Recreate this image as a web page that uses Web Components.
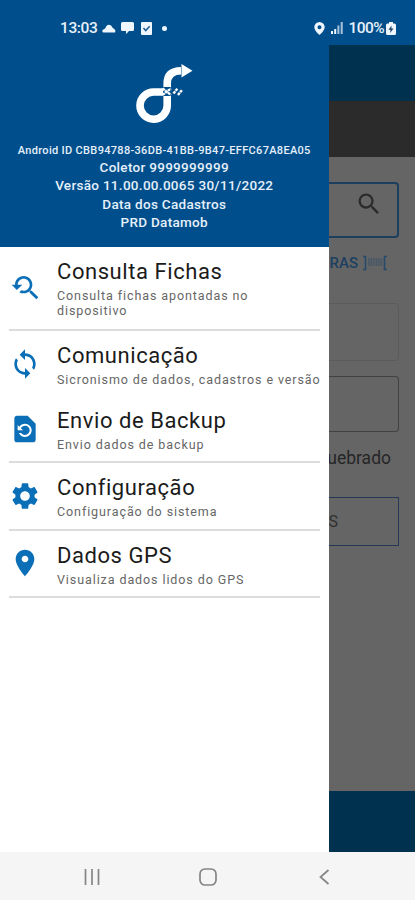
<!DOCTYPE html>
<html lang="pt-BR">
<head>
<meta charset="utf-8">
<title>Datamob</title>
<style>
  body {
    margin: 0;
    font-family: Roboto, "Liberation Sans", sans-serif;
    --brand: #004f8c;
    --accent: #0b6fb8;
  }
</style>
</head>
<body>
<app-screen>
  <status-bar slot="status" time="13:03" battery="100%"></status-bar>
  <nav-drawer>
    <drawer-header slot="header">
      <span slot="device">Android ID CBB94788-36DB-41BB-9B47-EFFC67A8EA05</span>
      <div>Coletor 9999999999</div>
      <div>Versão 11.00.00.0065 30/11/2022</div>
      <div>Data dos Cadastros</div>
      <div>PRD Datamob</div>
    </drawer-header>
    <drawer-item icon="search" style="height:84px" divider>Consulta Fichas<span slot="sub">Consulta fichas apontadas no<br>dispositivo</span></drawer-item>
    <drawer-item icon="sync" style="height:65px">Comunicação<span slot="sub">Sicronismo de dados, cadastros e versão</span></drawer-item>
    <drawer-item icon="backup" divider>Envio de Backup<span slot="sub">Envio dados de backup</span></drawer-item>
    <drawer-item icon="settings" divider>Configuração<span slot="sub">Configuração do sistema</span></drawer-item>
    <drawer-item icon="place" divider>Dados GPS<span slot="sub">Visualiza dados lidos do GPS</span></drawer-item>
  </nav-drawer>
  <dimmed-page></dimmed-page>
  <system-nav slot="nav"></system-nav>
</app-screen>

<script>
const ICONS = {
  search: 'M17.01 14h-.8l-.27-.27c.98-1.14 1.57-2.61 1.57-4.23 0-3.59-2.91-6.5-6.5-6.5s-6.5 3-6.5 6.5H2l3.84 4 4.16-4H6.51C6.51 7 8.53 5 11.01 5s4.5 2.01 4.5 4.5c0 2.48-2.02 4.5-4.5 4.5-.65 0-1.26-.14-1.82-.38L7.71 15.1c.97.57 2.09.9 3.3.9 1.61 0 3.08-.59 4.22-1.57l.27.27v.79l5.01 4.99L22 19l-4.99-5z',
  sync: 'M12 4V1L8 5l4 4V6c3.31 0 6 2.69 6 6 0 1.01-.25 1.97-.7 2.8l1.46 1.46C19.54 15.03 20 13.57 20 12c0-4.42-3.58-8-8-8zm0 14c-3.31 0-6-2.69-6-6 0-1.01.25-1.97.7-2.8L5.24 7.74C4.46 8.97 4 10.43 4 12c0 4.42 3.58 8 8 8v3l4-4-4-4v3z',
  backup: 'M14 2H6c-1.1 0-1.99.9-1.99 2L4 20c0 1.1.89 2 1.99 2H18c1.1 0 2-.9 2-2V8l-6-6zm-2 16c-2.05 0-3.81-1.24-4.58-3h1.71c.63.9 1.68 1.5 2.87 1.5 1.93 0 3.5-1.57 3.5-3.5S13.93 9.5 12 9.5c-1.35 0-2.52.78-3.1 1.9l1.6 1.6h-4V9l1.3 1.3C8.69 8.92 10.23 8 12 8c2.76 0 5 2.24 5 5s-2.24 5-5 5z',
  settings: 'M19.14 12.94c.04-.3.06-.61.06-.94 0-.32-.02-.64-.07-.94l2.03-1.58c.18-.14.23-.41.12-.61l-1.92-3.32c-.12-.22-.37-.29-.59-.22l-2.39.96c-.5-.38-1.03-.7-1.62-.94l-.36-2.54c-.04-.24-.24-.41-.48-.41h-3.84c-.24 0-.43.17-.47.41l-.36 2.54c-.59.24-1.13.57-1.62.94l-2.39-.96c-.22-.08-.47 0-.59.22L2.74 8.87c-.12.21-.08.47.12.61l2.03 1.58c-.05.3-.09.63-.09.94s.02.64.07.94l-2.03 1.58c-.18.14-.23.41-.12.61l1.92 3.32c.12.22.37.29.59.22l2.39-.96c.5.38 1.03.7 1.62.94l.36 2.54c.05.24.24.41.48.41h3.84c.24 0 .44-.17.47-.41l.36-2.54c.59-.24 1.13-.56 1.62-.94l2.39.96c.22.08.47 0 .59-.22l1.92-3.32c.12-.22.07-.47-.12-.61l-2.01-1.58zM12 15.6c-1.98 0-3.6-1.62-3.6-3.6s1.62-3.6 3.6-3.6 3.6 1.62 3.6 3.6-1.62 3.6-3.6 3.6z',
  place: 'M12 2C8.13 2 5 5.13 5 9c0 5.25 7 13 7 13s7-7.75 7-13c0-3.87-3.13-7-7-7zm0 9.5c-1.38 0-2.5-1.12-2.5-2.5s1.12-2.5 2.5-2.5 2.5 1.12 2.5 2.5-1.12 2.5-2.5 2.5z'
};

class AppScreen extends HTMLElement {
  constructor() {
    super();
    this.attachShadow({ mode: 'open' }).innerHTML = `
      <style>
        :host {
          display: flex;
          flex-direction: column;
          width: 415px;
          height: 900px;
          overflow: hidden;
          background: #fff;
        }
        .body { display: flex; flex: 1; min-height: 0; }
      </style>
      <slot name="status"></slot>
      <div class="body"><slot></slot></div>
      <slot name="nav"></slot>
    `;
  }
}

class StatusBar extends HTMLElement {
  connectedCallback() {
    this.attachShadow({ mode: 'open' }).innerHTML = `
      <style>
        :host {
          display: flex;
          justify-content: space-between;
          align-items: center;
          box-sizing: border-box;
          height: 45px;
          padding: 11px 19px 0 60px;
          background: var(--brand);
          color: #e8f0fa;
          font-size: 15.5px;
          font-weight: 500;
        }
        div { display: flex; align-items: center; }
        svg { display: block; fill: #f0f6fd; }
        .time { letter-spacing: -.4px; }
        .battery { letter-spacing: -.6px; }
      </style>
      <div>
        <span class="time">${this.getAttribute('time')}</span>
        <svg style="margin-left:5px" width="14" height="9" viewBox="0 0 14 9"><path d="M1.8 8.500Q.3 8.500.3 7T2.200 5.200L3.600 3.800Q4.500.8 7 .8t3.400 2.700L13 5.700Q14 8.500 12.300 8.500z"/></svg>
        <svg style="margin-left:5px" width="13" height="12" viewBox="0 0 13 12"><path d="M1.5 0h10Q13 0 13 1.5v6Q13 9 11.5 9H8L5 12V9H1.5Q0 9 0 7.5v-6Q0 0 1.5 0z"/></svg>
        <svg style="margin-left:7px" width="11" height="13" viewBox="0 0 11 13"><rect width="11" height="13" rx="1"/><path d="M2.5 6l2.2 2.6L8.7 4.2" fill="none" stroke="#1d5c94" stroke-width="1.5"/></svg>
        <svg style="margin-left:10px" width="5" height="5" viewBox="0 0 5 5"><circle cx="2.5" cy="2.5" r="2.5"/></svg>
      </div>
      <div>
        <svg width="11" height="13" viewBox="0 0 11 13"><path fill-rule="evenodd" d="M5.5 0a5.2 5.2 0 0 1 5.2 5.2C10.7 8.5 5.5 13 5.5 13S.3 8.5.3 5.2A5.2 5.2 0 0 1 5.5 0zm0 3.2a2 2 0 1 0 0 4 2 2 0 0 0 0-4z"/></svg>
        <svg style="margin:0 6px" width="12" height="12" viewBox="0 0 12 12"><path d="M0 9h2v3H0zM3.2 7h2v5h-2z"/><path opacity=".7" d="M6.4 3.5h2V12h-2zM9.7 0h2v12h-2z"/></svg>
        <span class="battery">${this.getAttribute('battery')}</span>
        <svg style="margin-left:2px" width="10" height="13" viewBox="0 0 10 13"><path d="M3 0h4v1.5h1.5Q10 1.5 10 3v8.5Q10 13 8.5 13h-7Q0 13 0 11.5V3q0-1.5 1.5-1.5H3z"/><path d="M5.6 3.5L2.5 7.8h2.1l-.5 3.2 3.4-4.4H5.3z" fill="#173e66"/></svg>
      </div>
    `;
  }
}

class NavDrawer extends HTMLElement {
  constructor() {
    super();
    this.attachShadow({ mode: 'open' }).innerHTML = `
      <style>
        :host {
          display: flex;
          flex-direction: column;
          flex: none;
          width: 328.5px;
          background: #fff;
        }
      </style>
      <slot name="header"></slot>
      <slot></slot>
    `;
  }
}

class DrawerHeader extends HTMLElement {
  constructor() {
    super();
    this.attachShadow({ mode: 'open' }).innerHTML = `
      <style>
        :host {
          display: flex;
          flex-direction: column;
          align-items: center;
          box-sizing: border-box;
          height: 202px;
          padding-top: 18px;
          background: var(--brand);
          color: #e6effa;
          text-align: center;
          white-space: nowrap;
          font-weight: 500;
        }
        svg { display: block; margin-left: 2px; }
        .device { margin-top: 18px; font-size: 11px; line-height: 16px; letter-spacing: .32px; }
        .lines { margin-top: -1px; font-size: 13.5px; line-height: 18.4px; letter-spacing: .3px; }
      </style>
      <svg width="60" height="62" viewBox="0 0 60 62">
        <g fill="none" stroke="#fff" stroke-width="7.6">
          <path d="M28 29H18.7A13.6 13.6 0 1 0 32.2 42.6V33"/>
          <path d="M32.2 24v-3.5Q32.2 8 46 7.8"/>
        </g>
        <path d="M46.5 1l11 6.8L46.5 14.500z" fill="#fff"/>
        <path d="M27.500 25.500l8.500 6.400M27.500 31.900l8.500-6.400M38.500 30.500l4-5M43 32l4-5" stroke="#fff" stroke-width="2.4" stroke-dasharray="2.8 .6"/>
      </svg>
      <div class="device"><slot name="device"></slot></div>
      <div class="lines"><slot></slot></div>
    `;
  }
}

class DrawerItem extends HTMLElement {
  connectedCallback() {
    const divider = this.hasAttribute('divider');
    this.attachShadow({ mode: 'open' }).innerHTML = `
      <style>
        :host {
          display: flex;
          flex-direction: column;
          flex: none;
          height: 67.4px;
        }
        .row { display: flex; align-items: center; flex: 1; padding-left: 9px; }
        svg { flex: none; width: 32px; height: 32px; margin-right: 16px; fill: var(--accent); }
        .text { align-self: flex-start; padding-top: 12px; white-space: nowrap; }
        .title { font-size: 22px; line-height: 26px; letter-spacing: .56px; color: #1b1b1b; }
        .sub { margin-top: 2.8px; font-size: 12.5px; line-height: 15.5px; letter-spacing: .91px; color: #666; }
        hr { width: 311px; height: 2px; margin: 0 0 0 9px; border: 0; background: #dcdcdc; }
      </style>
      <div class="row">
        <svg viewBox="0 0 24 24"><path d="${ICONS[this.getAttribute('icon')]}"/></svg>
        <div class="text">
          <div class="title"><slot></slot></div>
          <div class="sub"><slot name="sub"></slot></div>
        </div>
      </div>
      ${divider ? '<hr>' : ''}
    `;
  }
}

// Strip of the entry form left visible beside the open drawer
class DimmedPage extends HTMLElement {
  constructor() {
    super();
    this.attachShadow({ mode: 'open' }).innerHTML = `
      <style>
        :host {
          display: flex;
          flex-direction: column;
          flex: 1;
          min-width: 0;
          overflow: hidden;
          background: #656565;
          color: #262626;
        }
        .bar { flex: none; height: 56px; background: #00324f; }
        .sub { background: #2b2b2b; }
        .form { flex: 1; display: flex; flex-direction: column; padding-right: 16px; white-space: nowrap; }
        .box { box-sizing: border-box; height: 56px; border: 1px solid #424242; border-left: 0; border-radius: 0 4px 4px 0; }
        .find { display: flex; justify-content: flex-end; margin-top: 25px; border: 2px solid #1d3f5e; border-left: 0; }
        .find svg { margin: 6px 14px 0 0; }
        .link { display: flex; align-items: center; gap: 4px; height: 20px; margin-top: 15px; padding-left: 1px; color: #1c3f60; font-size: 15px; font-weight: 500; }
        .faint { margin-top: 30px; height: 58px; border-color: #5b5b5b; }
        .check { display: flex; justify-content: flex-end; margin: 15px 8px 0 0; font-size: 17.5px; line-height: 22px; }
        .button { height: 49px; margin-top: 28px; border: 1.5px solid #223a58; border-left: 0; border-radius: 0; line-height: 48px; font-size: 16px; color: #303030; }
        .bottom { height: 61px; }
      </style>
      <div class="bar"></div>
      <div class="bar sub"></div>
      <div class="form">
        <div class="box find"><svg width="28" height="28" viewBox="0 0 24 24" fill="#2b2b2b"><path d="M15.5 14h-.79l-.28-.27A6.471 6.471 0 0 0 16 9.5 6.5 6.5 0 1 0 9.5 16c1.61 0 3.09-.59 4.23-1.57l.27.28v.79l5 4.99L20.49 19l-4.99-5zm-6 0C7.01 14 5 11.99 5 9.5S7.01 5 9.5 5 14 7.01 14 9.5 11.99 14 9.5 14z"/></svg></div>
        <div class="link"><span>RAS</span><svg width="26" height="16" viewBox="0 0 26 16" fill="none" stroke="#264a6b"><path stroke-width="1.6" d="M1 1.500h2.500V14.500H1M25 1.500h-2.500V14.500H25"/><path stroke-width="1.4" opacity=".5" d="M7 3v8M9.5 3v8M12 3v8M14.5 3v8M17 3v8M19.5 3v8"/></svg></div>
        <div class="box faint"></div>
        <div class="box" style="margin-top:15px"></div>
        <div class="check">uebrado</div>
        <div class="box button">S</div>
      </div>
      <div class="bar bottom"></div>
    `;
  }
}

class SystemNav extends HTMLElement {
  constructor() {
    super();
    this.attachShadow({ mode: 'open' }).innerHTML = `
      <style>
        :host {
          display: flex;
          justify-content: space-between;
          align-items: center;
          box-sizing: border-box;
          height: 48px;
          padding: 2px 85px 0 83px;
          background: #f5f5f5;
        }
        svg { display: block; fill: none; stroke: #858585; stroke-width: 1.7; }
        .home { margin-right: 4px; }
      </style>
      <svg width="18" height="18" viewBox="0 0 18 18"><path d="M2.5 1v16M9 1v16M15.5 1v16"/></svg>
      <svg class="home" width="18" height="18" viewBox="0 0 18 18"><rect x="1" y="1" width="16" height="16" rx="5"/></svg>
      <svg width="12" height="18" viewBox="0 0 12 18"><path d="M10.5 2L2.5 9l8 7"/></svg>
    `;
  }
}

customElements.define('app-screen', AppScreen);
customElements.define('status-bar', StatusBar);
customElements.define('nav-drawer', NavDrawer);
customElements.define('drawer-header', DrawerHeader);
customElements.define('drawer-item', DrawerItem);
customElements.define('dimmed-page', DimmedPage);
customElements.define('system-nav', SystemNav);
</script>
</body>
</html>
